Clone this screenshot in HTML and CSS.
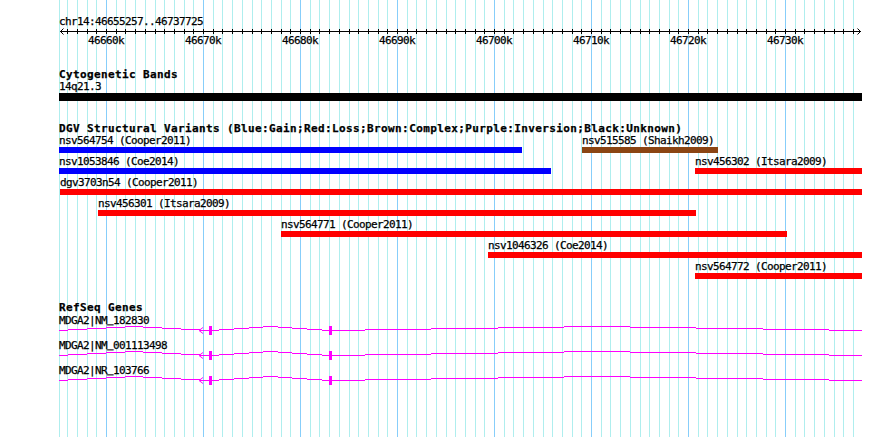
FILE: index.html
```html
<!DOCTYPE html>
<html lang="en">
<head>
    <meta charset="UTF-8">
    <meta name="viewport" content="width=device-width, initial-scale=1.0">
    <title>chr14:46655257..46737725</title>
    <link rel="stylesheet" href="styles.css">
</head>
<body>

    <div class="panel">
        <svg class="grid" id="grid" width="890" height="437"></svg>

        <div class="tracks">
            <div class="ruler">
                <div class="ruler-name">chr14:46655257..46737725</div>
                <svg class="axis" id="axis" width="803" height="6">
                    <line x1="1" y1="3.5" x2="802" y2="3.5"></line>
                    <path d="M4.5 0.5 L1.5 3.5 L4.5 6.5"></path>
                    <path d="M798.5 0.5 L801.5 3.5 L798.5 6.5"></path>
                </svg>
                <div class="ruler-scale">
                    <span class="scale-label" style="left:47px">46660k</span>
                    <span class="scale-label" style="left:144px">46670k</span>
                    <span class="scale-label" style="left:241px">46680k</span>
                    <span class="scale-label" style="left:338px">46690k</span>
                    <span class="scale-label" style="left:435px">46700k</span>
                    <span class="scale-label" style="left:532px">46710k</span>
                    <span class="scale-label" style="left:629px">46720k</span>
                    <span class="scale-label" style="left:726px">46730k</span>
                </div>
            </div>

            <section class="track track-cyto">
                <h2 class="track-title">Cytogenetic Bands</h2>
                <div class="lane lane-cyto">
                    <div class="feature" style="left:0;top:0">
                        <div class="feature-label">14q21.3</div>
                        <div class="band" style="width:803px"></div>
                    </div>
                </div>
            </section>

            <section class="track track-dgv">
                <h2 class="track-title">DGV Structural Variants (Blue:Gain;Red:Loss;Brown:Complex;Purple:Inversion;Black:Unknown)</h2>
                <div class="lane lane-dgv">
                    <div class="feature" style="left:0;top:0">
                        <div class="feature-label">nsv564754 (Cooper2011)</div>
                        <div class="bar gain" style="width:463px"></div>
                    </div>
                    <div class="feature" style="left:523px;top:0">
                        <div class="feature-label">nsv515585 (Shaikh2009)</div>
                        <div class="bar complex" style="width:136px"></div>
                    </div>
                    <div class="feature" style="left:0;top:21px">
                        <div class="feature-label">nsv1053846 (Coe2014)</div>
                        <div class="bar gain" style="width:492px"></div>
                    </div>
                    <div class="feature" style="left:636px;top:21px">
                        <div class="feature-label">nsv456302 (Itsara2009)</div>
                        <div class="bar loss" style="width:167px"></div>
                    </div>
                    <div class="feature" style="left:1px;top:42px">
                        <div class="feature-label">dgv3703n54 (Cooper2011)</div>
                        <div class="bar loss" style="width:802px"></div>
                    </div>
                    <div class="feature" style="left:39px;top:63px">
                        <div class="feature-label">nsv456301 (Itsara2009)</div>
                        <div class="bar loss" style="width:598px"></div>
                    </div>
                    <div class="feature" style="left:222px;top:84px">
                        <div class="feature-label">nsv564771 (Cooper2011)</div>
                        <div class="bar loss" style="width:506px"></div>
                    </div>
                    <div class="feature" style="left:429px;top:105px">
                        <div class="feature-label">nsv1046326 (Coe2014)</div>
                        <div class="bar loss" style="width:374px"></div>
                    </div>
                    <div class="feature" style="left:636px;top:126px">
                        <div class="feature-label">nsv564772 (Cooper2011)</div>
                        <div class="bar loss" style="width:167px"></div>
                    </div>
                </div>
            </section>

            <section class="track track-refseq">
                <h2 class="track-title">RefSeq Genes</h2>
                <div class="lane lane-genes">
                    <div class="feature" style="left:0;top:0">
                        <div class="feature-label">MDGA2|NM<span class="underscore">_</span>182830</div>
                        <svg class="gene" width="803" height="12">
                            <path class="intron"></path>
                            <path class="strand" d="M144 2.5 L140 5.5 L144 8.5"></path>
                            <rect class="exon" x="150" y="1" width="3" height="9"></rect>
                            <rect class="exon" x="270" y="1" width="3" height="9"></rect>
                        </svg>
                    </div>
                    <div class="feature" style="left:0;top:25px">
                        <div class="feature-label">MDGA2|NM<span class="underscore">_</span>001113498</div>
                        <svg class="gene" width="803" height="12">
                            <path class="intron"></path>
                            <path class="strand" d="M144 2.5 L140 5.5 L144 8.5"></path>
                            <rect class="exon" x="150" y="1" width="3" height="9"></rect>
                            <rect class="exon" x="270" y="1" width="3" height="9"></rect>
                        </svg>
                    </div>
                    <div class="feature" style="left:0;top:50px">
                        <div class="feature-label">MDGA2|NR<span class="underscore">_</span>103766</div>
                        <svg class="gene" width="803" height="12">
                            <path class="intron"></path>
                            <path class="strand" d="M144 2.5 L140 5.5 L144 8.5"></path>
                            <rect class="exon" x="150" y="1" width="3" height="9"></rect>
                            <rect class="exon" x="270" y="1" width="3" height="9"></rect>
                        </svg>
                    </div>
                </div>
            </section>
        </div>
    </div>

    <script>
        var SVG_NS = 'http://www.w3.org/2000/svg';
        var TRACK_LEFT = 59;

        // 1 kb = 9.7 px, 46660k sits at x = 106
        function kbToX(kb) {
            return Math.round(106 + (kb - 46660) * 9.7);
        }

        function addLine(svg, x, y1, y2, cls) {
            var line = document.createElementNS(SVG_NS, 'line');
            line.setAttribute('x1', x + 0.5);
            line.setAttribute('x2', x + 0.5);
            line.setAttribute('y1', y1);
            line.setAttribute('y2', y2);
            if (cls) line.setAttribute('class', cls);
            svg.appendChild(line);
        }

        var grid = document.getElementById('grid');
        var axis = document.getElementById('axis');
        addLine(grid, TRACK_LEFT, 0, 437);
        for (var kb = 46656; kb <= 46737; kb++) {
            var x = kbToX(kb);
            addLine(grid, x, 0, 437, kb % 10 === 0 ? 'major' : '');
            addLine(axis, x - TRACK_LEFT, 1, 6);
        }

        // curved connector drawn as 9 flat steps, peak 4px above the line
        function intronPath(a, b, y) {
            var levels = [0, 1, 2, 3, 4, 3, 2, 1, 0];
            var w = (b - a) / 8;
            var d = '';
            var x0 = a;
            for (var i = 0; i < 9; i++) {
                var x1 = i < 8 ? Math.round(a + w / 2 + i * w) : b;
                d += 'M' + x0 + ' ' + (y - levels[i]) + 'H' + x1;
                x0 = x1;
            }
            return d;
        }

        var introns = intronPath(0, 150, 5.5) + intronPath(153, 270, 5.5) + intronPath(273, 803, 5.5);
        var paths = document.querySelectorAll('.gene .intron');
        for (var i = 0; i < paths.length; i++) {
            paths[i].setAttribute('d', introns);
        }
    </script>

</body>
</html>
```

FILE: styles.css
```css
body {
    margin: 0;
    background-color: #fff;
}

.panel {
    position: relative;
    width: 890px;
    height: 437px;
    overflow: hidden;
    font-family: "DejaVu Sans Mono", "Liberation Mono", monospace;
    font-size: 11px;
    letter-spacing: -0.62px;
    color: #000;
    -webkit-text-stroke: 0.25px #000;
}

.grid {
    position: absolute;
    top: 0;
    left: 0;
    shape-rendering: crispEdges;
}

.grid line {
    stroke: #afeeee;
    stroke-width: 1;
}

.grid line.major {
    stroke: #87cefa;
}

.tracks {
    position: relative;
    width: 803px;
    padding: 15px 0 0 59px;
}

.ruler-name {
    height: 13px;
    line-height: 13px;
    white-space: nowrap;
}

.axis {
    display: block;
    overflow: visible;
}

.axis line {
    stroke: #000;
    stroke-width: 1;
    shape-rendering: crispEdges;
}

.axis path {
    fill: none;
    stroke: #000;
    stroke-width: 1;
}

.ruler-scale {
    position: relative;
    height: 13px;
    line-height: 13px;
}

.scale-label {
    position: absolute;
    top: 0;
    transform: translateX(-50%);
    white-space: nowrap;
}

.track {
    margin-top: 21px;
}

.track-refseq {
    margin-top: 22px;
}

.track-title {
    margin: 0;
    height: 12px;
    line-height: 13px;
    font-size: 11px;
    font-weight: bold;
    letter-spacing: 0.38px;
    white-space: nowrap;
}

.track-refseq .track-title {
    height: 13px;
}

.lane {
    position: relative;
}

.lane-cyto {
    height: 21px;
}

.lane-dgv {
    height: 145px;
}

.lane-genes {
    height: 75px;
}

.feature {
    position: absolute;
}

.feature-label {
    position: relative;
    z-index: 1;
    height: 13px;
    line-height: 13px;
    white-space: nowrap;
}

/* the font's underscore is a hairline below the baseline;
   paint it as a shadow sitting on the baseline instead */
.underscore {
    color: transparent;
    -webkit-text-stroke: 0;
    text-shadow: 0 -2px 0 #000, 0 -2.5px 0 #000, 0 -1.5px 0 #000;
}

.band {
    height: 8px;
    background-color: #000;
}

.bar {
    height: 6px;
}

.bar.gain {
    background-color: #0000ff;
}

.bar.loss {
    background-color: #ff0000;
}

.bar.complex {
    background-color: #8b4513;
}

.gene {
    display: block;
    margin-top: -2px;
    overflow: visible;
}

.gene .intron {
    fill: none;
    stroke: #ff00ff;
    stroke-width: 1;
    shape-rendering: crispEdges;
}

.gene .strand {
    fill: none;
    stroke: #ff00ff;
    stroke-width: 1;
}

.gene .exon {
    fill: #ff00ff;
    shape-rendering: crispEdges;
}
```
